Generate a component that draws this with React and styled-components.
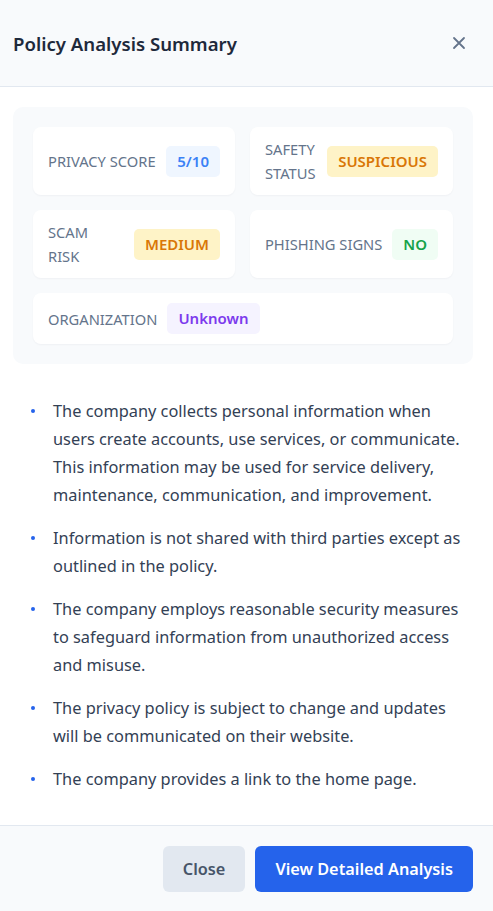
import React from "react";
import styled, { createGlobalStyle } from "styled-components";

const GlobalStyle = createGlobalStyle`
  html, body {
    margin: 0;
    padding: 0;
    background: #ffffff;
  }
  body {
    font-family: "Noto Sans", "Open Sans", Arial, sans-serif;
    color: #1e293b;
  }
  * {
    box-sizing: border-box;
  }
`;

// labels keep the line breaks they have in the narrow cards
const facts = [
  { label: "Privacy Score", value: "5/10", tone: "blue" },
  { label: "Safety\nStatus", value: "Suspicious", tone: "amber" },
  { label: "Scam\nRisk", value: "Medium", tone: "amber" },
  { label: "Phishing Signs", value: "No", tone: "green" },
  { label: "Organization", value: "Unknown", tone: "purple", wide: true, plain: true },
];

const points = [
  "The company collects personal information when users create accounts, use services, or communicate. This information may be used for service delivery, maintenance, communication, and improvement.",
  "Information is not shared with third parties except as outlined in the policy.",
  "The company employs reasonable security measures to safeguard information from unauthorized access and misuse.",
  "The privacy policy is subject to change and updates will be communicated on their website.",
  "The company provides a link to the home page.",
];

const tones = {
  blue: { bg: "#eff6ff", fg: "#3b82f6" },
  amber: { bg: "#fef3c7", fg: "#d97706" },
  green: { bg: "#f0fdf4", fg: "#16a34a" },
  purple: { bg: "#f5f3ff", fg: "#7c3aed" },
};

export default function App() {
  return (
    <>
      <GlobalStyle />
      <Modal>
        <Header>
          <Title>Policy Analysis Summary</Title>
          <CloseIcon aria-label="Close">
            <svg width="14" height="14" viewBox="0 0 14 14" fill="none">
              <path d="M2 2L12 12M12 2L2 12" stroke="#64748b" strokeWidth="1.8" strokeLinecap="round" />
            </svg>
          </CloseIcon>
        </Header>
        <Body>
          <FactsPanel>
            {facts.map((f) => (
              <FactCard key={f.label} $wide={f.wide}>
                <FactLabel>{f.label}</FactLabel>
                <Badge $tone={f.tone} $plain={f.plain}>{f.value}</Badge>
              </FactCard>
            ))}
          </FactsPanel>
          <Points>
            {points.map((p) => (
              <Point key={p}>{p}</Point>
            ))}
          </Points>
        </Body>
        <Footer>
          <SecondaryButton>Close</SecondaryButton>
          <PrimaryButton>View Detailed Analysis</PrimaryButton>
        </Footer>
      </Modal>
    </>
  );
}

const Modal = styled.div`
  width: 493px;
  min-height: 911px;
  display: flex;
  flex-direction: column;
  background: #ffffff;
`;

const Header = styled.div`
  height: 87px;
  display: flex;
  align-items: center;
  justify-content: space-between;
  padding: 0 27px 0 13px;
  background: #f8fafc;
  border-bottom: 1px solid #e2e8f0;
`;

const Title = styled.h2`
  margin: 0;
  font-size: 18.6px;
  font-weight: 600;
  color: #1e293b;
`;

const CloseIcon = styled.button`
  border: 0;
  background: none;
  padding: 0;
  display: flex;
  cursor: pointer;
`;

const Body = styled.div`
  flex: 1;
  padding: 20px 20px 20px 13px;
`;

const FactsPanel = styled.div`
  display: grid;
  grid-template-columns: 1fr 1fr;
  gap: 15px;
  padding: 20px;
  background: #f8fafc;
  border-radius: 10px;
`;

const FactCard = styled.div`
  grid-column: ${(p) => (p.$wide ? "1 / -1" : "auto")};
  display: flex;
  align-items: center;
  justify-content: ${(p) => (p.$wide ? "flex-start" : "space-between")};
  gap: 10px;
  padding: 10px 15px;
  background: #ffffff;
  border-radius: 8px;
  box-shadow: 0 1px 2px rgba(15, 23, 42, 0.04);
`;

const FactLabel = styled.span`
  font-size: 14.7px;
  line-height: 24px;
  color: #64748b;
  text-transform: uppercase;
  white-space: pre;
`;

const Badge = styled.span`
  flex-shrink: 0;
  padding: 5px 11px;
  border-radius: 5px;
  font-size: 15px;
  line-height: 21px;
  font-weight: 600;
  white-space: nowrap;
  text-transform: ${(p) => (p.$plain ? "none" : "uppercase")};
  background: ${(p) => tones[p.$tone].bg};
  color: ${(p) => tones[p.$tone].fg};
`;

const Points = styled.ul`
  list-style: none;
  margin: 33px 0 0;
  padding: 0;
  display: flex;
  flex-direction: column;
  gap: 15px;
`;

const Point = styled.li`
  position: relative;
  padding-left: 40px;
  font-size: 16.35px;
  line-height: 28px;
  color: #334155;

  &::before {
    content: "";
    position: absolute;
    left: 18px;
    top: 12px;
    width: 4px;
    height: 4px;
    border-radius: 50%;
    background: #2563eb;
  }
`;

const Footer = styled.div`
  display: flex;
  justify-content: flex-end;
  gap: 10px;
  padding: 20px 20px 19px;
  background: #f8fafc;
  border-top: 1px solid #e2e8f0;
`;

const ButtonBase = styled.button`
  border: 0;
  border-radius: 6px;
  padding: 12px 20px;
  font-family: inherit;
  font-size: 16.3px;
  line-height: 22px;
  font-weight: 600;
  cursor: pointer;
`;

const SecondaryButton = styled(ButtonBase)`
  background: #e2e8f0;
  color: #475569;
`;

const PrimaryButton = styled(ButtonBase)`
  background: #2563eb;
  color: #ffffff;
`;
